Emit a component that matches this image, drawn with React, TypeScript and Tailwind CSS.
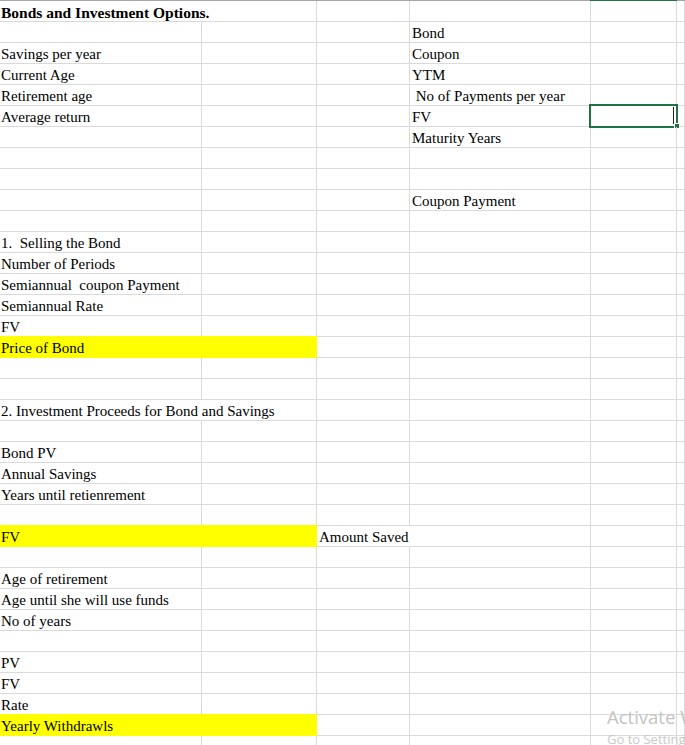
import React from "react";

interface SheetRow {
  a?: string;
  c?: string;
  d?: string;
  bold?: boolean;
  yellow?: boolean;
  spillA?: boolean; // text in A runs over into B
  spillC?: boolean; // text in C runs over into D
  selectE?: boolean;
}

const rows: SheetRow[] = [
  { a: "Bonds and Investment Options.", bold: true, spillA: true },
  { d: "Bond" },
  { a: "Savings per year", d: "Coupon" },
  { a: "Current Age", d: "YTM" },
  { a: "Retirement age", d: " No of Payments per year" },
  { a: "Average return", d: "FV", selectE: true },
  { d: "Maturity Years" },
  {},
  {},
  { d: "Coupon Payment" },
  {},
  { a: "1.  Selling the Bond" },
  { a: "Number of Periods" },
  { a: "Semiannual  coupon Payment" },
  { a: "Semiannual Rate" },
  { a: "FV" },
  { a: "Price of Bond", yellow: true },
  {},
  {},
  { a: "2. Investment Proceeds for Bond and Savings", spillA: true },
  {},
  { a: "Bond PV" },
  { a: "Annual Savings" },
  { a: "Years until retienrement" },
  {},
  { a: "FV", yellow: true, c: "Amount Saved", spillC: true },
  {},
  { a: "Age of retirement" },
  { a: "Age until she will use funds" },
  { a: "No of years" },
  {},
  { a: "PV" },
  { a: "FV" },
  { a: "Rate" },
  { a: "Yearly Withdrawls", yellow: true },
  {},
];

const cellBase =
  "h-[21px] shrink-0 border-b border-r border-[#dadada] flex items-end pl-[1px] leading-[17px] whitespace-pre text-black";

const yellowCell = "bg-[#ffff00] border-[#ffff00] shadow-[0_-1px_0_#ffff00]";

function Row({ row }: { row: SheetRow }) {
  return (
    <div className="flex">
      {/* A */}
      <div
        className={`${cellBase} w-[202px] ${row.bold ? "font-bold text-[15.5px]" : ""} ${
          row.yellow ? yellowCell : ""
        } ${row.spillA ? "border-r-transparent" : ""}`}
      >
        {row.a}
      </div>
      {/* B */}
      <div className={`${cellBase} w-[115px] ${row.yellow ? yellowCell : ""}`}></div>
      {/* C */}
      <div className={`${cellBase} w-[93px] pl-[2px] ${row.spillC ? "border-r-transparent" : ""}`}>
        {row.c}
      </div>
      {/* D */}
      <div className={`${cellBase} w-[181px] pl-[2px]`}>{row.d}</div>
      {/* E */}
      <div className={`${cellBase} w-[86px] relative`}>
        {row.selectE && (
          <>
            <div className="absolute -left-[2px] -top-[2px] w-[89px] h-[24px] border-2 border-[#217346]" />
            <div className="absolute left-[82px] top-[1px] w-px h-[17px] bg-[#222]" />
            <div className="absolute left-[83px] top-[17px] w-[6px] h-[6px] bg-[#217346] border border-white" />
          </>
        )}
      </div>
      {/* F */}
      <div className={`${cellBase} flex-1`}></div>
    </div>
  );
}

export default function App() {
  return (
    <div
      className="relative w-[685px] h-[745px] overflow-hidden bg-white text-[15px]"
      style={{ fontFamily: '"Liberation Serif", "Times New Roman", serif' }}
    >
      {/* column header edge */}
      <div className="flex h-px">
        <div className="w-[590px] bg-[#a6a6a6]" />
        <div className="w-[87px] bg-[#217346]" />
        <div className="flex-1 bg-[#a6a6a6]" />
      </div>

      {rows.map((row, i) => (
        <Row key={i} row={row} />
      ))}

      {/* Windows activation watermark, cut by the window edge as in the screenshot */}
      <div
        className="absolute left-[607px] top-[704px] whitespace-nowrap text-[#c3c3c3] pointer-events-none"
        style={{ fontFamily: '"Open Sans", "Noto Sans", sans-serif' }}
      >
        <div className="text-[18.5px] leading-[26px]">Activate Windows</div>
        <div className="text-[13px] leading-[18px] text-[#c9c9c9]">Go to Settings to activate Windows.</div>
      </div>
    </div>
  );
}
